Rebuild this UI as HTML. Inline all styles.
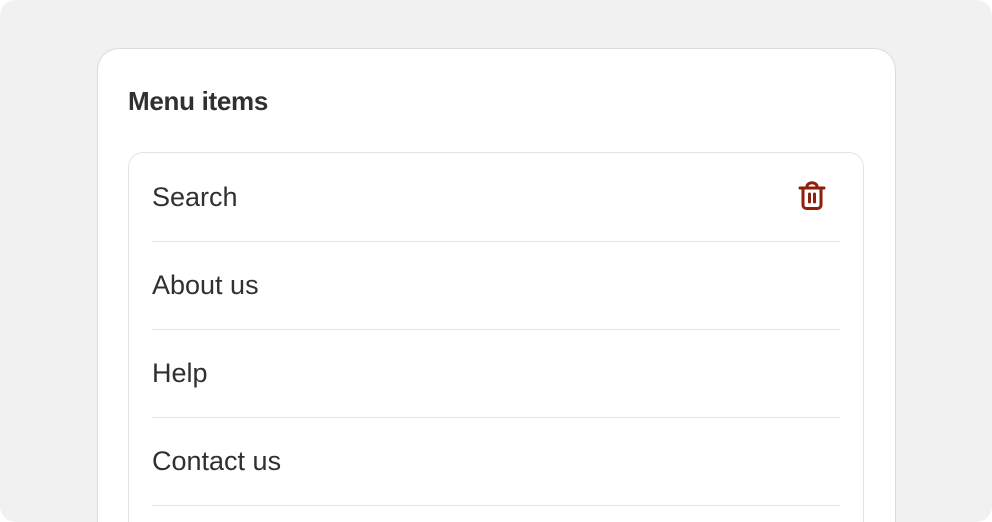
<!DOCTYPE html>
<html><head><style>
html,body{margin:0;padding:0;width:992px;height:522px;overflow:hidden;background:#fff}
.wrap{position:relative;width:992px;height:522px;overflow:hidden}
.bg{position:absolute;left:0;top:0;width:992px;height:522px;background:#f1f1f1;border-radius:16px}
.card{position:absolute;left:97px;top:48px;width:799px;height:474px;box-sizing:border-box;background:#fff;border:1.5px solid #dcdcdc;border-bottom:none;border-radius:22px 22px 0 0}
h1{position:absolute;left:128px;top:86px;margin:0;font:bold 26px/30px "Liberation Sans",sans-serif;color:#303030;letter-spacing:-0.3px}
.list{position:absolute;left:128px;top:152px;width:736px;height:370px;box-sizing:border-box;border:1.5px solid #e3e3e3;border-bottom:none;border-radius:15px 15px 0 0}
.row{position:absolute;left:152px;width:688px;height:88px;border-bottom:1.5px solid #e3e3e3;font:27px/88px "Liberation Sans",sans-serif;color:#303030}
</style></head><body><div class="wrap">
<div class="bg"></div>
<div class="card"></div>
<h1>Menu items</h1>
<div class="list"></div>
<div class="row" style="top:153px">Search</div>
<div class="row" style="top:241px">About us</div>
<div class="row" style="top:329px">Help</div>
<div class="row" style="top:417px">Contact us</div>
<svg style="position:absolute;left:797px;top:181px" width="30" height="30" viewBox="0 0 30 30" fill="none" stroke="#8e1f0b" stroke-width="3" stroke-linecap="round" stroke-linejoin="round">
<path d="M3 7H27"/><path d="M10 7V5.5a4 3 0 0 1 10 0V7"/><path d="M6 8V24a3.5 3.5 0 0 0 3.5 3.5h11A3.5 3.5 0 0 0 24 24V8"/><path d="M12.5 13v8M17.5 13v8"/>
</svg>
</div></body></html>
